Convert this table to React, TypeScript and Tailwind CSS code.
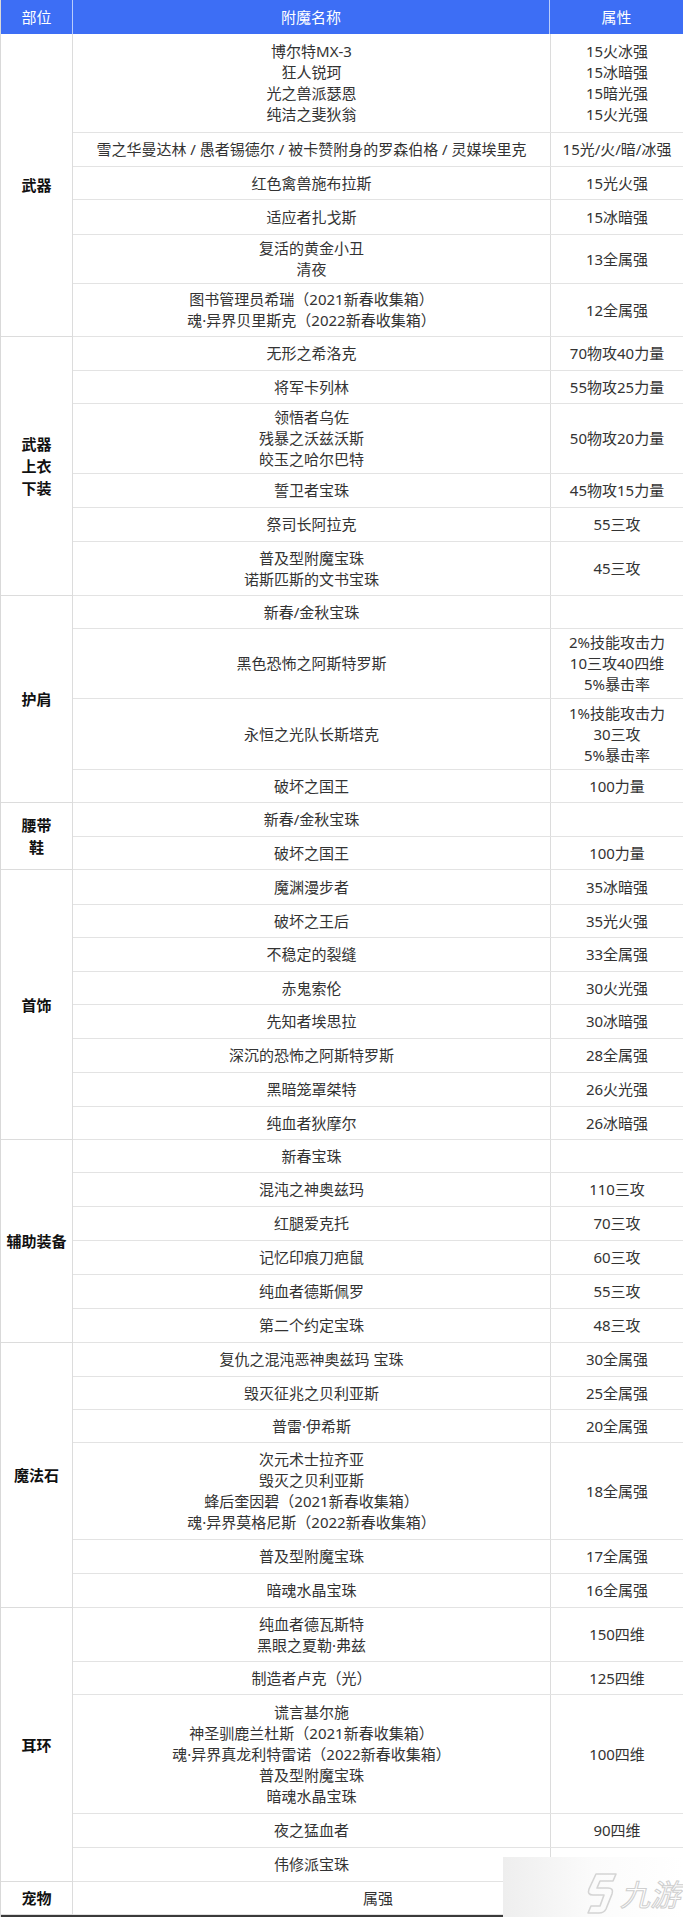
import React from "react";

type Row = { n: string[]; a: string[]; h: string; span?: boolean };
type Section = { label: string[]; rows: Row[] };

const sections: Section[] = [
  {
    label: ["武器"],
    rows: [
      {
        n: ["博尔特MX-3", "狂人锐珂", "光之兽派瑟恩", "纯洁之斐狄翁"],
        a: ["15火冰强", "15冰暗强", "15暗光强", "15火光强"],
        h: "h-[99px]",
      },
      {
        n: ["雪之华曼达林 / 愚者锡德尔 / 被卡赞附身的罗森伯格 / 灵媒埃里克"],
        a: ["15光/火/暗/冰强"],
        h: "h-[34px]",
      },
      { n: ["红色禽兽施布拉斯"], a: ["15光火强"], h: "h-[33px]" },
      { n: ["适应者扎戈斯"], a: ["15冰暗强"], h: "h-[35px]" },
      { n: ["复活的黄金小丑", "清夜"], a: ["13全属强"], h: "h-[49px]" },
      {
        n: ["图书管理员希瑞（2021新春收集箱）", "魂·异界贝里斯克（2022新春收集箱）"],
        a: ["12全属强"],
        h: "h-[53px]",
      },
    ],
  },
  {
    label: ["武器", "上衣", "下装"],
    rows: [
      { n: ["无形之希洛克"], a: ["70物攻40力量"], h: "h-[34px]" },
      { n: ["将军卡列林"], a: ["55物攻25力量"], h: "h-[33px]" },
      {
        n: ["领悟者乌佐", "残暴之沃兹沃斯", "皎玉之哈尔巴特"],
        a: ["50物攻20力量"],
        h: "h-[70px]",
      },
      { n: ["誓卫者宝珠"], a: ["45物攻15力量"], h: "h-[34px]" },
      { n: ["祭司长阿拉克"], a: ["55三攻"], h: "h-[34px]" },
      { n: ["普及型附魔宝珠", "诺斯匹斯的文书宝珠"], a: ["45三攻"], h: "h-[54px]" },
    ],
  },
  {
    label: ["护肩"],
    rows: [
      { n: ["新春/金秋宝珠"], a: [], h: "h-[33px]" },
      {
        n: ["黑色恐怖之阿斯特罗斯"],
        a: ["2%技能攻击力", "10三攻40四维", "5%暴击率"],
        h: "h-[70px]",
      },
      {
        n: ["永恒之光队长斯塔克"],
        a: ["1%技能攻击力", "30三攻", "5%暴击率"],
        h: "h-[71px]",
      },
      { n: ["破坏之国王"], a: ["100力量"], h: "h-[33px]" },
    ],
  },
  {
    label: ["腰带", "鞋"],
    rows: [
      { n: ["新春/金秋宝珠"], a: [], h: "h-[34px]" },
      { n: ["破坏之国王"], a: ["100力量"], h: "h-[33px]" },
    ],
  },
  {
    label: ["首饰"],
    rows: [
      { n: ["魔渊漫步者"], a: ["35冰暗强"], h: "h-[35px]" },
      { n: ["破坏之王后"], a: ["35光火强"], h: "h-[33px]" },
      { n: ["不稳定的裂缝"], a: ["33全属强"], h: "h-[34px]" },
      { n: ["赤鬼索伦"], a: ["30火光强"], h: "h-[33px]" },
      { n: ["先知者埃思拉"], a: ["30冰暗强"], h: "h-[34px]" },
      { n: ["深沉的恐怖之阿斯特罗斯"], a: ["28全属强"], h: "h-[34px]" },
      { n: ["黑暗笼罩桀特"], a: ["26火光强"], h: "h-[34px]" },
      { n: ["纯血者狄摩尔"], a: ["26冰暗强"], h: "h-[33px]" },
    ],
  },
  {
    label: ["辅助装备"],
    rows: [
      { n: ["新春宝珠"], a: [], h: "h-[33px]" },
      { n: ["混沌之神奥兹玛"], a: ["110三攻"], h: "h-[34px]" },
      { n: ["红腿爱克托"], a: ["70三攻"], h: "h-[34px]" },
      { n: ["记忆印痕刀疤鼠"], a: ["60三攻"], h: "h-[34px]" },
      { n: ["纯血者德斯佩罗"], a: ["55三攻"], h: "h-[34px]" },
      { n: ["第二个约定宝珠"], a: ["48三攻"], h: "h-[34px]" },
    ],
  },
  {
    label: ["魔法石"],
    rows: [
      { n: ["复仇之混沌恶神奥兹玛 宝珠"], a: ["30全属强"], h: "h-[34px]" },
      { n: ["毁灭征兆之贝利亚斯"], a: ["25全属强"], h: "h-[33px]" },
      { n: ["普雷·伊希斯"], a: ["20全属强"], h: "h-[33px]" },
      {
        n: [
          "次元术士拉齐亚",
          "毁灭之贝利亚斯",
          "蜂后奎因碧（2021新春收集箱）",
          "魂·异界莫格尼斯（2022新春收集箱）",
        ],
        a: ["18全属强"],
        h: "h-[97px]",
      },
      { n: ["普及型附魔宝珠"], a: ["17全属强"], h: "h-[34px]" },
      { n: ["暗魂水晶宝珠"], a: ["16全属强"], h: "h-[34px]" },
    ],
  },
  {
    label: ["耳环"],
    rows: [
      { n: ["纯血者德瓦斯特", "黑眼之夏勒·弗兹"], a: ["150四维"], h: "h-[54px]" },
      { n: ["制造者卢克（光）"], a: ["125四维"], h: "h-[33px]" },
      {
        n: [
          "谎言基尔施",
          "神圣驯鹿兰杜斯（2021新春收集箱）",
          "魂·异界真龙利特雷诺（2022新春收集箱）",
          "普及型附魔宝珠",
          "暗魂水晶宝珠",
        ],
        a: ["100四维"],
        h: "h-[119px]",
      },
      { n: ["夜之猛血者"], a: ["90四维"], h: "h-[34px]" },
      { n: ["伟修派宝珠"], a: [], h: "h-[34px]" },
    ],
  },
  {
    label: ["宠物"],
    rows: [{ n: ["属强"], a: [], h: "h-[33px]", span: true }],
  },
];

function Lines({ items }: { items: string[] }) {
  return (
    <>
      {items.map((t, i) => (
        <div key={i} className="whitespace-nowrap leading-[21px]">
          {t}
        </div>
      ))}
    </>
  );
}

function Logo() {
  return (
    <svg width="34" height="44" viewBox="0 0 34 44" className="block">
      <path
        d="M12 3 L32 3 L29 10 L16 10 L13 17 L24 17 Q30 17 28 23 L22 38 Q20 42 15 42 L4 42 L7 35 L16 35 L20 24 L9 24 Q3 24 5 18 Z"
        fill="none"
        stroke="#d4d4d4"
        strokeWidth="1.6"
        strokeLinejoin="round"
      />
    </svg>
  );
}

export default function App() {
  return (
    <div
      className="relative w-[683px] bg-white text-[15px] text-[#333333]"
      style={{ fontFamily: '"Noto Sans", "Noto Sans CJK SC", sans-serif' }}
    >
      <div className="border-l border-[#d9d9d9]">
        {/* header */}
        <div className="flex h-[34px] bg-[#3d6ef5] text-white">
          <div className="flex w-[72px] items-center justify-center border-r border-[#b9ccfb]">
            部位
          </div>
          <div className="flex flex-1 items-center justify-center border-r border-[#b9ccfb]">
            附魔名称
          </div>
          <div className="flex w-[133px] items-center justify-center">属性</div>
        </div>

        {sections.map((s, si) => (
          <div key={si} className="flex">
            <div className="flex w-[72px] flex-col items-center justify-center border-r border-b border-[#dcdcdc] font-bold text-[#111111]">
              {s.label.map((l, i) => (
                <div key={i} className="leading-[22px]">
                  {l}
                </div>
              ))}
            </div>
            <div className="flex flex-1 flex-col">
              {s.rows.map((r, ri) => (
                <div key={ri} className={`flex border-b border-[#e3e3e3] ${r.h}`}>
                  <div className="flex flex-1 flex-col items-center justify-center text-center">
                    <Lines items={r.n} />
                  </div>
                  {!r.span && (
                    <div className="flex w-[133px] flex-col items-center justify-center border-l border-[#dcdcdc] text-center">
                      <Lines items={r.a} />
                    </div>
                  )}
                </div>
              ))}
            </div>
          </div>
        ))}
        <div className="h-[2px] bg-[#3a3a3a]" />
      </div>

      {/* watermark */}
      <div className="absolute bottom-0 right-0 flex h-[60px] w-[180px] items-end justify-end gap-[2px] bg-gradient-to-r from-[#eeeeee] via-[#fbfbfb] to-white pr-[3px] pb-[2px]">
        <Logo />
        <span
          className="mb-[3px] text-[30px] leading-[34px] text-white italic"
          style={{ WebkitTextStroke: "1px #cfcfcf" }}
        >
          九游
        </span>
      </div>
    </div>
  );
}
